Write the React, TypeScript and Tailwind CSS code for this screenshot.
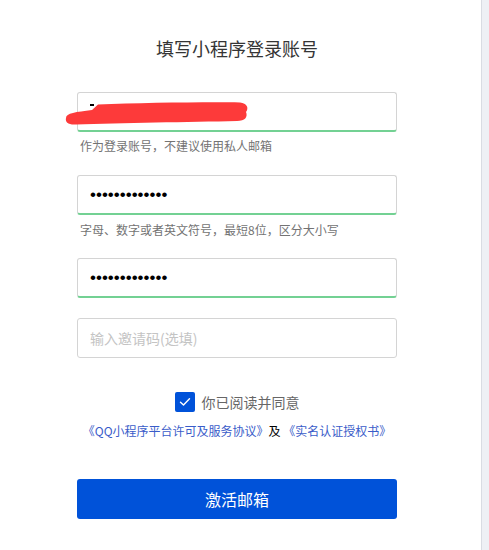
import React from "react";

const font = { fontFamily: '"Noto Sans CJK SC", "Noto Sans", sans-serif' };

export default function App() {
  return (
    <div className="flex w-[489px] h-[550px] bg-white overflow-hidden" style={font}>
      <div className="w-[481px] shrink-0 flex flex-col pl-[77px] pt-[36px]">
        <div className="w-[320px] flex flex-col">
          <h1 className="text-[18px] leading-[24px] text-[#353535] text-center font-normal">填写小程序登录账号</h1>

          <div className="relative mt-[32px]">
            <input
              type="text"
              readOnly
              className="block w-[320px] h-[40px] rounded-[3px] border border-[#d4d4d4] border-b-2 border-b-[#73d193] px-[12px] text-[14px] outline-none bg-white"
            />
            <div className="absolute left-[13px] top-[12px] w-[4px] h-[2px] bg-black" />
            <svg className="absolute left-[-12px] top-[9px]" width="186" height="26" viewBox="65 101 186 26">
              <path
                d="M66,118 C66,113 76,112 92,110 L98,104.5 C140,103 200,102 240,102.5 C247,103 249,108 246,112 C248,117 245,121 237,121 C190,122 120,123 76,124.5 C68,125 65,122 66,118 Z"
                fill="#fd3a3a"
              />
            </svg>
          </div>
          <p className="mt-[6px] pl-[3px] text-[12px] leading-[16px] text-[#737373]">作为登录账号，不建议使用私人邮箱</p>

          <input
            type="password"
            readOnly
            value="aaaaaaaaaaaaa"
            className="mt-[21px] block w-[320px] h-[40px] rounded-[3px] border border-[#d4d4d4] border-b-2 border-b-[#73d193] px-[12px] font-['Liberation_Sans',Arial,sans-serif] text-[17px] text-black outline-none bg-white"
          />
          <p className="mt-[7px] pl-[3px] text-[12px] leading-[16px] text-[#737373]">字母、数字或者英文符号，最短8位，区分大小写</p>

          <input
            type="password"
            readOnly
            value="aaaaaaaaaaaaa"
            className="mt-[20px] block w-[320px] h-[40px] rounded-[3px] border border-[#d4d4d4] border-b-2 border-b-[#73d193] px-[12px] font-['Liberation_Sans',Arial,sans-serif] text-[17px] text-black outline-none bg-white"
          />

          <input
            type="text"
            readOnly
            placeholder="输入邀请码(选填)"
            className="mt-[20px] block w-[320px] h-[40px] rounded-[3px] border border-[#d4d4d4] px-[12px] text-[14px] outline-none bg-white placeholder:text-[#c4c4c4]"
          />

          <div className="mt-[34px] flex items-center justify-center gap-[7px]">
            <span className="w-[20px] h-[20px] rounded-[2px] bg-[#0052d9] flex items-center justify-center">
              <svg width="12" height="10" viewBox="0 0 12 10" fill="none">
                <path d="M1.5 5.2 L4.5 8 L10.5 1.8" stroke="white" strokeWidth="1.4" strokeLinecap="round" strokeLinejoin="round" />
              </svg>
            </span>
            <span className="text-[14px] leading-[20px] text-[#666666]">你已阅读并同意</span>
          </div>

          <p className="mt-[11px] text-center text-[12px] leading-[16px] whitespace-nowrap">
            <span className="text-[#3a5cc9]">《QQ小程序平台许可及服务协议》</span>
            <span className="text-black">及 </span>
            <span className="text-[#3a5cc9]">《实名认证授权书》</span>
          </p>

          <button className="mt-[40px] w-[320px] h-[40px] rounded-[3px] bg-[#0052d9] text-white text-[16px]">激活邮箱</button>
        </div>
      </div>
      <div className="flex-1 bg-[#eef0f5] border-l border-[#d9dce3]" />
    </div>
  );
}
